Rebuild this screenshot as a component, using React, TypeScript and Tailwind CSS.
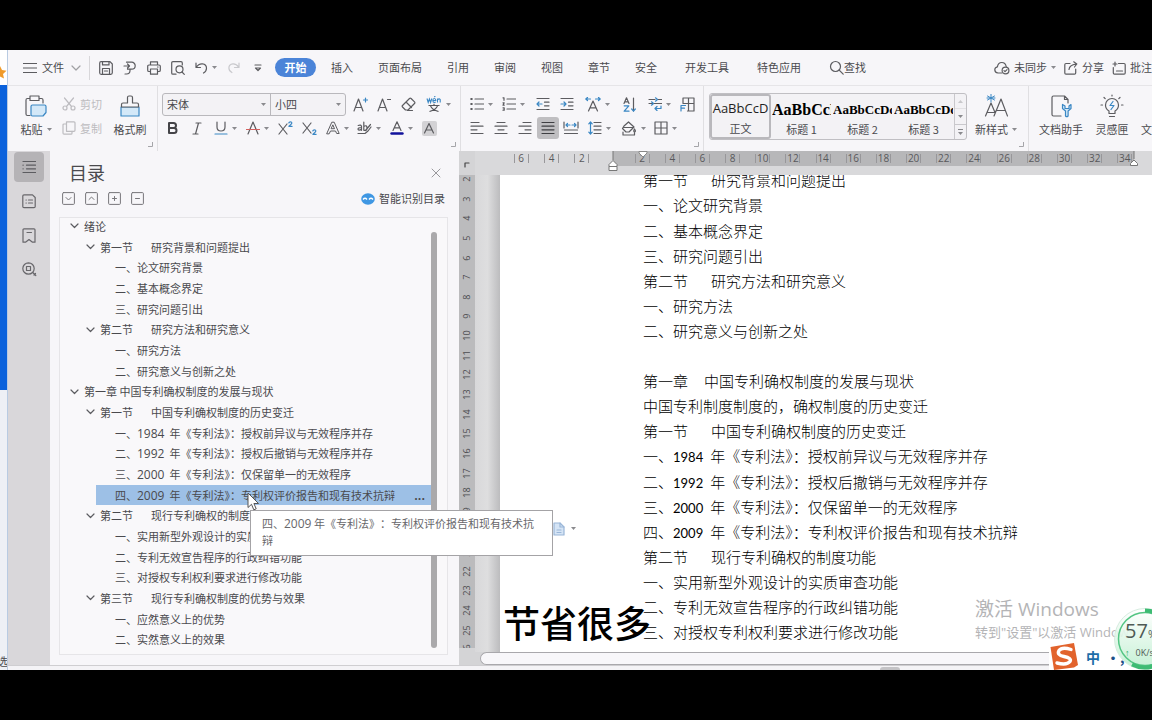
import type { ReactNode } from 'react';

type IconProps = { children: ReactNode; w?: number; h?: number; className?: string };

function Icon({ children, w = 14, h = 14, className = 'text-[#5c5c60]' }: IconProps) {
  return (
    <svg
      width={w}
      height={h}
      viewBox={`0 0 ${w} ${h}`}
      fill="none"
      stroke="currentColor"
      strokeWidth="1.2"
      strokeLinecap="round"
      strokeLinejoin="round"
      className={`shrink-0 ${className}`}
      aria-hidden="true"
    >
      {children}
    </svg>
  );
}

const BLUE = '#3a87c4';

function Caret() {
  return (
    <svg width="5" height="3" viewBox="0 0 5 3" className="shrink-0 fill-[#8a8a8e]" aria-hidden="true">
      <path d="M0 0h5L2.5 3z" />
    </svg>
  );
}

type ToolProps = { label: string; children: ReactNode; width?: string; caret?: boolean };

function Tool({ label, children, width = 'w-6', caret = false }: ToolProps) {
  return (
    <button type="button" aria-label={label} className={`flex h-6 shrink-0 items-center justify-center gap-1 ${width}`}>
      {children}
      {caret && <Caret />}
    </button>
  );
}

function Corner() {
  return (
    <svg width="5" height="5" viewBox="0 0 5 5" className="absolute right-1 bottom-1 fill-none stroke-[#a5a5a9]" aria-hidden="true">
      <path d="M4.5 0v4.5H0" />
    </svg>
  );
}

type BigProps = { label: string; children: ReactNode; width: string; caret?: boolean };

function BigTool({ label, children, width, caret = false }: BigProps) {
  return (
    <button type="button" className={`flex shrink-0 flex-col items-center ${width}`}>
      <span className="flex h-7 items-center justify-center">{children}</span>
      <span className="flex items-center gap-1 text-[11px] leading-[18px] whitespace-nowrap">
        {label}
        {caret && <Caret />}
      </span>
    </button>
  );
}

function MenuBar() {
  return (
    <nav className="flex h-9 shrink-0 items-center border-b border-[#e6e5e8] pl-[15px] text-[11px]">
      <button type="button" className="flex items-center gap-[5px]">
        <Icon>
          <path d="M.5 2.5h13M.5 7h13M.5 11.5h13" />
        </Icon>
        文件
        <Icon w={10} h={6} className="ml-0.5 text-[#a0a0a4]">
          <path d="M1 1l4 4 4-4" />
        </Icon>
      </button>
      <span className="mr-1 ml-2 h-6 w-px shrink-0 bg-[#d8d7da]" />
      <Tool label="保存">
        <Icon>
          <path d="M2 .7h9l2.3 2.3v8.800q0 1.500-1.500 1.500H2.200q-1.500 0-1.500-1.500V2.200Q.7.7 2 .7zM3.500.9v3h6.500v-3M3.500 13V7.500h7V13M5.500 10h3" />
        </Icon>
      </Tool>
      <Tool label="输出为PDF">
        <Icon>
          <path d="M3.500 1.200h5.200a3.500 3.500 0 010 7H7M1 5h5.500M4.500 3l2 2-2 2M4.500 8.200h2.500v1.300q0 3.500-3.500 3.500H2" />
        </Icon>
      </Tool>
      <Tool label="打印">
        <Icon>
          <path d="M3.500 4V.8h7V4M3.500 10.500H2q-1.300 0-1.300-1.300V5.300Q.7 4 2 4h10q1.300 0 1.300 1.300v3.900q0 1.300-1.300 1.300h-1.500M3.500 8h7v5.200h-7zM10.500 6h.6" />
        </Icon>
      </Tool>
      <Tool label="打印预览">
        <Icon>
          <path d="M5 13.200H2q-1.300 0-1.300-1.300V2Q.7.700 2 .7h8q1.300 0 1.300 1.300v2M11 11l2.300 2.300" />
          <circle cx="8.500" cy="8.300" r="3.500" />
        </Icon>
      </Tool>
      <Tool label="撤销" width="w-8" caret>
        <Icon w={13}>
          <path d="M1 2v4.500h4.500M1.300 6.300Q3.500 2.500 7.500 2.800q4 .4 4 4.400 0 3-3 4.800" />
        </Icon>
      </Tool>
      <Tool label="恢复">
        <Icon w={12} className="text-[#c9c9cd]">
          <path d="M11 2v4.500H6.500M10.700 6.300Q8.500 2.800 5 2.900.900 3.300.9 7q0 3 3 4.500" />
        </Icon>
      </Tool>
      <Tool label="自定义快速访问工具栏">
        <Icon w={8} h={8}>
          <path d="M1 1h6M1.500 4h5L4 6.500z" />
        </Icon>
      </Tool>
      <button type="button" className="ml-[5px] h-[19px] w-[41px] shrink-0 rounded-full bg-[#4b84d8] font-bold text-white">
        开始
      </button>
      <div className="ml-[15px] flex shrink-0 gap-[25px] whitespace-nowrap">
        {['插入', '页面布局', '引用', '审阅', '视图', '章节', '安全'].map((t) => (
          <button type="button" key={t}>
            {t}
          </button>
        ))}
      </div>
      <div className="ml-7 flex shrink-0 gap-7 whitespace-nowrap">
        <button type="button">开发工具</button>
        <button type="button">特色应用</button>
        <button type="button" className="flex items-center">
          <Icon w={15} h={15}>
            <circle cx="6.500" cy="6.500" r="5" />
            <path d="M10.200 10.200l4 4" />
          </Icon>
          查找
        </button>
      </div>
      <div className="ml-auto flex shrink-0 items-center gap-2 whitespace-nowrap">
        <button type="button" className="flex items-center gap-1">
          <Icon w={16}>
            <path d="M8 12H4Q.8 11.700.8 8.800q0-2.500 2.600-3Q4 1.500 7.800 1.500q3.600 0 4.400 4" />
            <circle cx="11.500" cy="9.500" r="3.400" />
            <path d="M10 9.600l1 1 2-2" />
          </Icon>
          未同步
          <Caret />
        </button>
        <button type="button" className="flex items-center gap-1">
          <Icon>
            <path d="M6 2.500H2Q.8 2.500.8 3.700V12q0 1.200 1.200 1.200h8.500q1.200 0 1.200-1.200V8M5 8.500Q5.500 4 12 3.200M9.700.8L12.800 3l-2.300 3" />
          </Icon>
          分享
        </button>
        <button type="button" className="flex items-center gap-1">
          <Icon>
            <path d="M6.500 2.500h5.500q1.200 0 1.200 1.200v8.300q0 1.200-1.200 1.200H2.500q-1.200 0-1.200-1.200V6.500M4.500 10h6M1 3h4M3 1v4" />
          </Icon>
          批注
        </button>
      </div>
    </nav>
  );
}

function ClipboardGroup() {
  return (
    <section className="relative flex w-[149px] shrink-0 pt-1.5 pl-3">
      <BigTool label="粘贴" width="w-8" caret>
        <Icon w={22} h={22}>
          <path d="M5 3.500H2.500q-1.500 0-1.500 1.500v14q0 1.500 1.500 1.500H5M14 3.500h2.500Q18 3.500 18 5v3M5 1h9v4.500H5z" />
          <path d="M7.500 10h12q1.500 0 1.500 1.500v6L18 21H7.500Q6 21 6 19.500v-8Q6 10 7.500 10z" fill="#d3e8f8" stroke={BLUE} />
        </Icon>
      </BigTool>
      <div className="ml-2.5 flex flex-col text-[11px] text-[#bdbcc0]">
        <button type="button" className="flex h-6 items-center gap-1 whitespace-nowrap">
          <Icon className="text-[#bdbcc0]">
            <circle cx="3" cy="11" r="2" />
            <circle cx="11" cy="11" r="2" />
            <path d="M4.500 9.500L11.500 1M9.500 9.500L2.500 1" />
          </Icon>
          剪切
        </button>
        <button type="button" className="flex h-6 items-center gap-1 whitespace-nowrap">
          <Icon className="text-[#bdbcc0]">
            <path d="M4.500.800h7.500q1 0 1 1v7.500q0 1-1 1H4.500zM4.500 3H2Q1 3 1 4v8q0 1.200 1 1.200h7q1 0 1-1v-2" />
          </Icon>
          复制
        </button>
      </div>
      <BigTool label="格式刷" width="w-14">
        <Icon w={20} h={22}>
          <path d="M1 12h18v9H1z" fill="#d3e8f8" stroke={BLUE} />
          <path d="M1.500 12V9.500Q1.500 8 3 8h4.500V2.500Q7.500 1 9 1h2q1.500 0 1.500 1.500V8H17q1.500 0 1.500 1.500V12z" fill="#f7f6f9" />
        </Icon>
      </BigTool>
      <Corner />
    </section>
  );
}

function FontGroup() {
  return (
    <section className="relative w-[303px] shrink-0 border-l border-[#e0dfe2] pt-1.5">
      <div className="flex h-6 items-center pl-1">
        <div className="flex h-[23px] w-[184px] rounded-[3px] border border-[#b9b8bc] bg-[#f3f2f5] text-[11px]">
          <label className="flex w-[108px] items-center border-r border-[#b9b8bc] pr-1">
            <select aria-label="字体" className="w-full appearance-none bg-transparent pl-1 outline-none">
              <option>宋体</option>
            </select>
            <Caret />
          </label>
          <label className="flex flex-1 items-center pr-1">
            <select aria-label="字号" className="w-full appearance-none bg-transparent pl-1 outline-none">
              <option>小四</option>
            </select>
            <Caret />
          </label>
        </div>
        <span className="w-0.5" />
        <Tool label="增大字号">
          <Icon w={15} h={15}>
            <path d="M1 14L5.500 2 10 14M2.500 10.500h6" />
            <path d="M10.500 3h4M12.500 1v4" stroke={BLUE} />
          </Icon>
        </Tool>
        <Tool label="减小字号">
          <Icon w={14} h={15}>
            <path d="M1 14L5.500 2 10 14M2.500 10.500h6M10.500 2.500h3" />
          </Icon>
        </Tool>
        <Tool label="清除格式">
          <Icon w={15} h={15}>
            <path d="M1.500 8.500L8.500 1.500q.8-.7 1.600 0l3.400 3.400q.8.800 0 1.600L7 13H4.500l-3-3q-.7-.7 0-1.500zM5 5l5.500 5.500M6.500 13.500h5" />
          </Icon>
        </Tool>
        <Tool label="拼音指南" width="w-9" caret>
          <svg width="16" height="16" viewBox="0 0 16 16" fill="none" strokeWidth="1.100" aria-hidden="true">
            <path d="M1 2.500l1.200 4 1.200-3.500 1.200 3.500 1.200-4M6.800 4.500h3q-.1-2-1.500-2t-1.500 2q0 2 1.700 2l1.200-.5M8.300 1l1-.9M11.500 6.500v-4M11.500 4q1.500-2 2.700-.5v3" stroke={BLUE} />
            <path d="M2.500 9.500h11M8 7.800v1.700M4.500 10q2 4 8 5.500M11.500 10q-2 4-8 5.500" stroke="#55555a" />
          </svg>
        </Tool>
      </div>
      <div className="flex h-6 items-center pl-[3px]">
        <Tool label="加粗">
          <Icon w={12} h={12} className="text-[#444448]">
            <path d="M2 1h4.500a2.400 2.400 0 010 5H2zM2 6h5a2.500 2.500 0 010 5H2z" strokeWidth="2" />
          </Icon>
        </Tool>
        <Tool label="倾斜">
          <Icon w={10} h={13}>
            <path d="M4 1h5M1 12h5M6.500 1l-3 11" />
          </Icon>
        </Tool>
        <Tool label="下划线" width="w-8" caret>
          <Icon>
            <path d="M3 1v5q0 4 4 4t4-4V1" />
            <path d="M1 13h12" stroke={BLUE} />
          </Icon>
        </Tool>
        <Tool label="删除线" width="w-8" caret>
          <Icon>
            <path d="M2 13L7 1l5 12" />
            <path d="M0 8.500h14" stroke="#d2605e" />
          </Icon>
        </Tool>
        <Tool label="上标">
          <Icon w={15}>
            <path d="M1 3l8 10M9 3L1 13" />
            <path d="M10.800 2q.3-1.200 1.600-1.200 1.500 0 1.400 1.300 0 .8-2.900 3.200h3.200" stroke={BLUE} />
          </Icon>
        </Tool>
        <Tool label="下标">
          <Icon w={15}>
            <path d="M1 2l8 10M9 2L1 12" />
            <path d="M10.800 10q.3-1.200 1.600-1.200 1.500 0 1.400 1.300 0 .8-2.900 3.200h3.200" stroke={BLUE} />
          </Icon>
        </Tool>
        <Tool label="文字效果" width="w-8" caret>
          <Icon>
            <path d="M.8 12.500L5.800 1.200h2.400l5 11.300h-2.500L9.500 10h-5l-1.200 2.500zM5.500 7.700h3L7 4.200z" strokeWidth="1" />
          </Icon>
        </Tool>
        <Tool label="突出显示" width="w-8" caret>
          <Icon w={15}>
            <path d="M1.200 4.500q2.800-1 3.300.8v4M4.500 6.500Q1 6.500 1 8.200q.3 1.800 3.500.2M6.800 1v8.300M6.800 5.500Q10 3.500 10 7t-3.200 2M8.500 9.500L13.500 3.500M1 12.500h7l3-2.500 3-4" />
          </Icon>
        </Tool>
        <Tool label="字体颜色" width="w-8" caret>
          <Icon>
            <path d="M3 9.500L7 .8l4 8.700M4.200 6.800h5.600" />
            <path d="M1.500 12.500h11" stroke="#12129c" strokeWidth="2.400" />
          </Icon>
        </Tool>
        <Tool label="字符底纹">
          <span className="flex size-[15px] items-center justify-center rounded-[2px] bg-[#d3d2d5]">
            <Icon w={12} h={12}>
              <path d="M1.500 11L6 1.500 10.500 11M3 8h6" />
            </Icon>
          </span>
        </Tool>
      </div>
      <Corner />
    </section>
  );
}

function ParagraphGroup() {
  return (
    <section className="relative w-[243px] shrink-0 border-l border-[#e0dfe2] pt-1.5 pl-1">
      <div className="flex h-6 items-center">
        <Tool label="项目符号" width="w-8" caret>
          <Icon>
            <path d="M5 2h9M5 7h9M5 12h9" />
            <path d="M1.200 2h.6M1.200 7h.6M1.200 12h.6" strokeWidth="2" />
          </Icon>
        </Tool>
        <Tool label="编号" width="w-8" caret>
          <Icon>
            <path d="M5 2h9M5 7h9M5 12h9M1 .8h1v2.500M1 5.800h1.200L1 8.200h1.200M1 10.800h1.200v2.400H1" />
          </Icon>
        </Tool>
        <Tool label="减少缩进" width="w-7">
          <Icon>
            <path d="M1 1.500h12M8.500 5.200H13M8.500 8.800H13M1 12.500h12" />
            <path d="M6 7H1M3 5L1 7l2 2" stroke={BLUE} />
          </Icon>
        </Tool>
        <Tool label="增加缩进" width="w-5">
          <Icon>
            <path d="M1 1.500h12M8.500 5.200H13M8.500 8.800H13M1 12.500h12" />
            <path d="M1 7h5M4 5l2 2-2 2" stroke={BLUE} />
          </Icon>
        </Tool>
        <Tool label="中文版式" width="w-10" caret>
          <Icon w={16} h={15}>
            <path d="M3.500 14L8 4l4.500 10M5.200 10.800h5.600" />
            <path d="M5.500 2H.8M2.500.500L.8 2l1.700 1.500M10.500 2h4.700M13.500.500L15.200 2l-1.700 1.500" stroke={BLUE} />
          </Icon>
        </Tool>
        <Tool label="排序">
          <Icon w={13} h={15}>
            <path d="M1 6.500L3.500.800 6 6.500M1.800 4.800h3.400M10.500 1v13" />
            <path d="M1.200 8.800h4.600L1.200 14.200h4.800M8.700 12l1.800 2.200 1.800-2.200" stroke={BLUE} />
          </Icon>
        </Tool>
        <Tool label="显示编辑标记" width="w-9" caret>
          <Icon>
            <path d="M1 2.500h6M10 2.500h3.500M1 6.500h12.500" />
            <path d="M7.500.8l2 1.700-2 1.700M13 9v2.500H7M9 9.500l-2 2 2 2M3.500 4.800l2 1.700-2 1.700" stroke={BLUE} />
          </Icon>
        </Tool>
        <Tool label="制表位" width="w-5">
          <Icon w={15} h={15}>
            <path d="M3 6V1h11v13H7.500M3 6.500h11M8.500 1v13" />
            <path d="M1 14V8.500h4.500M1 11.200h3.500" stroke={BLUE} />
          </Icon>
        </Tool>
      </div>
      <div className="flex h-6 items-center">
        <Tool label="左对齐">
          <Icon>
            <path d="M1 1.500h8M1 5.200h12M1 8.800h6M1 12.500h12" />
          </Icon>
        </Tool>
        <Tool label="居中对齐">
          <Icon>
            <path d="M3 1.500h8M1 5.200h12M4 8.800h6M1 12.500h12" />
          </Icon>
        </Tool>
        <Tool label="右对齐">
          <Icon>
            <path d="M5 1.500h8M1 5.200h12M7 8.800h6M1 12.500h12" />
          </Icon>
        </Tool>
        <Tool label="两端对齐" width="w-[22px]">
          <span className="flex size-[22px] items-center justify-center rounded-[3px] bg-[#bfbec1]">
            <Icon className="text-[#3f3f43]">
              <path d="M1 1.500h12M1 5.200h12M1 8.800h12M1 12.500h12" />
            </Icon>
          </span>
        </Tool>
        <Tool label="分散对齐">
          <Icon w={16}>
            <path d="M1 1v6M15 1v6M1.500 9h13M1.500 12.500h13" />
            <path d="M3 4h4M4.500 2.500L3 4l1.500 1.500M13 4H9M11.500 2.500L13 4l-1.500 1.500" stroke={BLUE} />
          </Icon>
        </Tool>
        <Tool label="行距" width="w-8" caret>
          <Icon>
            <path d="M6 1.500h7M6 5.200h7M6 8.800h7M6 12.500h7" />
            <path d="M2.500 1v12M.8 2.800L2.500 1l1.700 1.800M.8 11.200L2.500 13l1.700-1.800" stroke={BLUE} />
          </Icon>
        </Tool>
        <Tool label="底纹颜色" width="w-9" caret>
          <Icon w={16} h={15}>
            <path d="M3 5L7.500 1l5.500 5-5 5H5L1.500 7.500zM3 6.500h9M2 11v3h11.500v-2M13.500 8q1.800 2.500 0 3.200-1.500-.6 0-3.200z" />
          </Icon>
        </Tool>
        <Tool label="边框" width="w-7" caret>
          <Icon>
            <path d="M1 1h12v12H1zM7 1v12M1 7h12" />
          </Icon>
        </Tool>
      </div>
      <Corner />
    </section>
  );
}

const STYLES = [
  { name: '标题 1', sample: 'text-[16px]' },
  { name: '标题 2', sample: 'text-[13px]' },
  { name: '标题 3', sample: 'text-[13px]' },
];

function StylesGroup() {
  return (
    <section className="relative flex w-[325px] shrink-0 items-start border-l border-[#e0dfe2] pt-[7px] pl-[5px]">
      <div className="flex h-[47px] w-[258px] shrink-0 overflow-hidden rounded-[3px] border border-[#c0bfc3] bg-[#f3f2f5]">
        <button type="button" className="w-[61px] shrink-0 overflow-hidden rounded-[3px] border-2 border-[#b9b8bc] text-[11px]">
          <span className="block h-[23px] font-['Open_Sans',sans-serif] text-[13px] leading-[24px] whitespace-nowrap text-[#1f1f22]">AaBbCcD</span>
          <span className="block leading-[18px]">正文</span>
        </button>
        {STYLES.map((s) => (
          <button type="button" key={s.name} className="w-[61px] shrink-0 overflow-hidden px-px pt-0.5 text-[11px]">
            <span className={`block h-[23px] overflow-hidden text-left font-['Liberation_Serif',serif] leading-[26px] font-bold whitespace-nowrap text-black ${s.sample}`}>
              AaBbCcDd
            </span>
            <span className="block leading-[18px]">{s.name}</span>
          </button>
        ))}
        <div className="flex flex-1 flex-col divide-y divide-[#c9c8cc] border-l border-[#c9c8cc]">
          <button type="button" aria-label="上一行" className="flex flex-1 items-center justify-center opacity-40">
            <span className="rotate-180">
              <Caret />
            </span>
          </button>
          <button type="button" aria-label="下一行" className="flex flex-1 items-center justify-center">
            <Caret />
          </button>
          <button type="button" aria-label="更多样式" className="flex flex-1 flex-col items-center justify-center gap-0.5">
            <span className="h-px w-[5px] bg-[#8a8a8e]" />
            <Caret />
          </button>
        </div>
      </div>
      <div className="-mt-px ml-1">
        <BigTool label="新样式" width="w-[50px]" caret>
          <Icon w={24} h={24}>
            <path d="M1.500 22L7 9l4 9.500M3 18.500h8M10 22l7-17 6.500 17M12 16.500h9" />
            <path d="M7 0v8M3.500 2l7 4M10.500 2l-7 4M3 4h8" stroke={BLUE} strokeWidth="1" />
          </Icon>
        </BigTool>
      </div>
      <Corner />
    </section>
  );
}

function AssistGroup() {
  return (
    <section className="flex shrink-0 gap-[3px] border-l border-[#e0dfe2] pt-1.5 pl-1.5">
      <BigTool label="文档助手" width="w-[52px]">
        <Icon w={22} h={24}>
          <path d="M11 22H3.500Q2 22 2 20.500v-17Q2 2 3.500 2h11L18 5.500V9M14.500 2v3.500H18" />
          <path d="M12.500 10.500v4l3 2.500v5q1.300 1.300 2.600 0v-5l2.900-2.500v-4l-2 1.500v2.500h-4V12z" fill="#d3e8f8" stroke={BLUE} />
        </Icon>
      </BigTool>
      <BigTool label="灵感匣" width="w-11">
        <Icon w={24} h={24}>
          <path d="M9 19.500v-2.500Q5.500 15 5.500 11a6.500 6.500 0 0113 0q0 4-3.500 6v2.500zM9.500 22.500h5M12 1v1M4 3.500l1.200 1.200M20 3.500l-1.200 1.200M1 11h1.500M21.500 11H23" />
          <path d="M13 7.500l-3 4h4l-3 4" stroke={BLUE} />
        </Icon>
      </BigTool>
      <BigTool label="文字工具" width="w-[52px]">
        <span />
      </BigTool>
    </section>
  );
}

function Rail() {
  return (
    <aside className="flex w-[42px] shrink-0 flex-col items-center gap-1 bg-[#d9d7da] pt-px">
      <button type="button" aria-label="目录" className="flex size-[30px] items-center justify-center rounded-[4px] bg-[#b5b3b6]">
        <Icon>
          <path d="M1 1.500h12.500M4.500 5.200h9M4.500 8.800h9M1 12.500h12.500M1 5.200h.2M1 8.800h.2" />
        </Icon>
      </button>
      {[
        { label: '章节导航', d: 'M2.500.800h8L13.200 3.500v9q0 1.200-1.200 1.200H2q-1.200 0-1.200-1.200V2Q.8.800 2 .8M4 6h.3M4 9h.3M6.500 6h4M6.500 9h4' },
        { label: '书签', d: 'M2 .8h10q1 0 1 1v12.400h-2.500L7 11.500l-3.500 2.700H1V1.800q0-1 1-1zM5 4.500h4.500' },
        { label: '查找和替换', d: 'M6.500.8a5.700 5.700 0 100 11.400 5.700 5.700 0 000-11.400zM4.500 4.500h4v4h-4zM10.800 10.500l3 3M12 13l1.500-1.500' },
      ].map((b) => (
        <button type="button" key={b.label} aria-label={b.label} className="flex size-[30px] items-center justify-center">
          <Icon w={15} h={15} className="text-[#68676b]">
            <path d={b.d} />
          </Icon>
        </button>
      ))}
    </aside>
  );
}

type TocItem = { level: 0 | 1 | 2; head?: string; text: string; year?: string; active?: boolean };

const TOC: TocItem[] = [
  { level: 0, text: '绪论' },
  { level: 1, head: '第一节', text: '研究背景和问题提出' },
  { level: 2, text: '一、论文研究背景' },
  { level: 2, text: '二、基本概念界定' },
  { level: 2, text: '三、研究问题引出' },
  { level: 1, head: '第二节', text: '研究方法和研究意义' },
  { level: 2, text: '一、研究方法' },
  { level: 2, text: '二、研究意义与创新之处' },
  { level: 0, text: '第一章 中国专利确权制度的发展与现状' },
  { level: 1, head: '第一节', text: '中国专利确权制度的历史变迁' },
  { level: 2, head: '一、', year: '1984', text: '年《专利法》：授权前异议与无效程序并存' },
  { level: 2, head: '二、', year: '1992', text: '年《专利法》：授权后撤销与无效程序并存' },
  { level: 2, head: '三、', year: '2000', text: '年《专利法》：仅保留单一的无效程序' },
  { level: 2, head: '四、', year: '2009', text: '年《专利法》：专利权评价报告和现有技术抗辩', active: true },
  { level: 1, head: '第二节', text: '现行专利确权的制度功能' },
  { level: 2, text: '一、实用新型外观设计的实质审查功能' },
  { level: 2, text: '二、专利无效宣告程序的行政纠错功能' },
  { level: 2, text: '三、对授权专利权利要求进行修改功能' },
  { level: 1, head: '第三节', text: '现行专利确权制度的优势与效果' },
  { level: 2, text: '一、应然意义上的优势' },
  { level: 2, text: '二、实然意义上的效果' },
];

const TOC_INDENT = ['ml-2.5', 'ml-[26px]', 'ml-9 pl-[19px]'];

function TocRow({ item }: { item: TocItem }) {
  return (
    <li className={`flex items-center whitespace-nowrap ${TOC_INDENT[item.level]} ${item.active ? 'bg-[#9dc0e6]' : ''}`}>
      {item.level < 2 && (
        <Icon w={9} h={6} className="mr-[5px] text-[#5c5c60]">
          <path d="M1 1l3.500 3.500L8 1" />
        </Icon>
      )}
      <span className="flex items-baseline">
        {item.head && <span className={item.year ? '' : 'mr-[18px]'}>{item.head}</span>}
        {item.year && <span className="mr-[5px] font-['Open_Sans',sans-serif] text-[12px] leading-none">{item.year}</span>}
        <span>{item.text}</span>
      </span>
      {item.active && <span className="ml-auto pr-1.5 font-bold">...</span>}
    </li>
  );
}

function TocPanel() {
  return (
    <section className="flex w-[409px] shrink-0 flex-col bg-[#f7f6f9] pr-[11px] pl-[9px]">
      <header className="flex h-[37px] shrink-0 items-end justify-between pr-[7px] pl-2.5">
        <h2 className="text-[18px] leading-[32px]">目录</h2>
        <button type="button" aria-label="关闭" className="pb-2.5">
          <Icon w={10} h={10} className="text-[#99989c]">
            <path d="M1 1l8 8M9 1L1 9" strokeWidth="1" />
          </Icon>
        </button>
      </header>
      <div className="flex h-[29px] shrink-0 items-center gap-2.5 pb-2 pl-[3px] text-[11px]">
        {[
          { label: '展开', d: 'M4 5.500l2.500 2.500L9 5.500' },
          { label: '收起', d: 'M4 7.500L6.500 5 9 7.500' },
          { label: '添加', d: 'M4.500 6.500h4M6.500 4.500v4' },
          { label: '删除', d: 'M4.500 6.500h4' },
        ].map((b) => (
          <button type="button" key={b.label} aria-label={b.label}>
            <Icon w={13} h={13} className="text-[#77767a]">
              <rect x=".6" y=".6" width="11.800" height="11.800" rx="1" strokeWidth="1" />
              <path d={b.d} strokeWidth="1" />
            </Icon>
          </button>
        ))}
        <button type="button" className="mr-[3px] ml-auto flex items-center gap-1">
          <svg width="14" height="12" viewBox="0 0 14 12" aria-hidden="true">
            <ellipse cx="7" cy="6" rx="6.800" ry="5.800" fill="#3f97e3" />
            <path d="M2 6.500Q4 4 6 6.500M8 6.500q2-2.500 4 0" stroke="#fff" strokeWidth="1.300" fill="none" />
          </svg>
          智能识别目录
        </button>
      </div>
      <div className="mb-2.5 flex min-h-0 flex-1 border border-[#e6e5e8] bg-[#f9f8fa] pr-2.5 pb-1 text-[11px]">
        <ul className="-mt-0.5 grid min-w-0 flex-1 auto-rows-fr">
          {TOC.map((item) => (
            <TocRow key={(item.head ?? '') + item.text} item={item} />
          ))}
        </ul>
        <div className="mt-3.5 mb-0.5 w-1.5 shrink-0 rounded-full bg-[#aaa9ab]" />
      </div>
    </section>
  );
}

function RulerCell({ value }: { value: number }) {
  return (
    <span className="flex min-w-0 flex-1 items-center justify-center">
      <span className="flex w-[15px] items-center justify-center border-x border-[#98979a] leading-[9px]">{value}</span>
    </span>
  );
}

const SCALE = Array.from({ length: 17 }, (_, i) => (i + 1) * 2);

function HorizontalRuler() {
  return (
    <div className="relative h-6 shrink-0 overflow-hidden bg-[#d9d9db] font-['Open_Sans',sans-serif] text-[10px] text-[#59595c]">
      <div className="flex h-[15px] pl-[31px]">
        <div className="flex w-[91px] shrink-0">
          {[6, 4, 2].map((n) => (
            <RulerCell key={n} value={n} />
          ))}
        </div>
        <span className="w-4 shrink-0" />
        <div className="flex w-[521px] shrink-0 bg-[#b7b7b9] pl-3.5">
          <div className="flex w-[513px] shrink-0">
            {SCALE.map((n) => (
              <RulerCell key={n} value={n} />
            ))}
          </div>
        </div>
      </div>
      <svg width="12" height="24" viewBox="0 0 12 24" className="absolute top-0 left-[132px] fill-white stroke-[#777]" aria-hidden="true">
        <path d="M6 0v9" />
        <path d="M2 13.500L6 9.500l4 4v2H2zM2 15.500h8v4H2z" />
      </svg>
      <svg width="10" height="8" viewBox="0 0 10 8" className="absolute top-0 left-[163px] fill-white stroke-[#888]" aria-hidden="true">
        <path d="M1 .5h8v1.500L5 6 1 2z" />
      </svg>
      <svg width="10" height="16" viewBox="0 0 10 16" className="absolute top-0 left-[654px] fill-white stroke-[#777]" aria-hidden="true">
        <path d="M5 0v8" />
        <path d="M1.500 14.500v-2L5 9l3.500 3.500v2z" />
      </svg>
    </div>
  );
}

function VerticalRuler() {
  return (
    <div className="flex w-4 shrink-0 flex-col bg-[#d4d4d6]">
      <span className="flex h-6 shrink-0 items-center justify-center pt-1">
        <Icon w={6} h={6} className="text-[#444]">
          <path d="M1 5V1h4" />
        </Icon>
      </span>
      <div className="h-[473px] overflow-hidden bg-[#bbbbbd]">
        <div className="-mt-1.5 grid h-[491px] auto-rows-fr font-['Open_Sans',sans-serif] text-[9px] text-[#4c4c50]">
          {Array.from({ length: 25 }, (_, i) => i + 2).map((n) => (
            <span key={n} className="flex rotate-180 items-center justify-center [writing-mode:vertical-rl]">
              {n}
            </span>
          ))}
        </div>
      </div>
    </div>
  );
}

type Line = { head?: string; gap?: string; year?: string; text: string };

const LINES: Line[] = [
  { head: '第一节', gap: 'mr-[23px]', text: '研究背景和问题提出' },
  { text: '一、论文研究背景' },
  { text: '二、基本概念界定' },
  { text: '三、研究问题引出' },
  { head: '第二节', gap: 'mr-[23px]', text: '研究方法和研究意义' },
  { text: '一、研究方法' },
  { text: '二、研究意义与创新之处' },
  { text: '' },
  { head: '第一章', gap: 'mr-4', text: '中国专利确权制度的发展与现状' },
  { text: '中国专利制度制度的，确权制度的历史变迁' },
  { head: '第一节', gap: 'mr-[23px]', text: '中国专利确权制度的历史变迁' },
  { head: '一、', year: '1984', text: '年《专利法》：授权前异议与无效程序并存' },
  { head: '二、', year: '1992', text: '年《专利法》：授权后撤销与无效程序并存' },
  { head: '三、', year: '2000', text: '年《专利法》：仅保留单一的无效程序' },
  { head: '四、', year: '2009', text: '年《专利法》：专利权评价报告和现有技术抗辩' },
  { head: '第二节', gap: 'mr-[23px]', text: '现行专利确权的制度功能' },
  { text: '一、实用新型外观设计的实质审查功能' },
  { text: '二、专利无效宣告程序的行政纠错功能' },
  { text: '三、对授权专利权利要求进行修改功能' },
];

function Document() {
  return (
    <div className="flex min-w-0 flex-1 flex-col bg-[#d4d4d6]">
      <HorizontalRuler />
      <div className="flex min-h-0 flex-1">
        <div className="w-[25px] shrink-0 bg-linear-to-r from-[#d8d8da] via-[#dededf] to-[#bcbcbe]" />
        <article className="min-w-0 flex-1 overflow-hidden bg-white pl-[143px] text-[15px] font-light text-black">
          <div className="-mt-[7px] grid h-[477px] auto-rows-fr">
            {LINES.map((l, i) => (
              <p key={i} className="flex items-center whitespace-nowrap">
                <span className="flex items-baseline">
                  {l.head && <span className={l.gap}>{l.head}</span>}
                  {l.year && <span className="mr-[7px] font-['Lato',sans-serif] text-[13px] leading-none font-normal">{l.year}</span>}
                  <span>{l.text}</span>
                </span>
              </p>
            ))}
          </div>
        </article>
      </div>
      <div className="ml-[5px] h-[13px] shrink-0 rounded-l-full border border-r-0 border-[#a9a8ac] bg-[#f8f7fa]" />
    </div>
  );
}

function Overlays() {
  return (
    <>
      <div role="tooltip" className="absolute top-[460px] left-[250px] w-[303px] border border-[#a4a3a6] bg-white pt-1 pr-2 pb-1.5 pl-[11px] text-[11px] leading-[17px] whitespace-nowrap text-[#68676b] [text-spacing-trim:space-all]">
        四、<span className="font-['Open_Sans',sans-serif] text-[12px]">2009</span> 年《专利法》：专利权评价报告和现有技术抗
        <br />辩
      </div>
      <svg width="12" height="20" viewBox="0 0 12 20" className="absolute top-[442px] left-[247px]" aria-hidden="true">
        <path d="M1 1v14.500l3.500-3.200 2.300 5.500 2.400-1-2.300-5.300h4.600z" fill="#fff" stroke="#555" />
      </svg>
      <button type="button" aria-label="粘贴选项" className="absolute top-[471px] left-[553px] flex items-center gap-1.5">
        <Icon w={12} h={15} className="text-[#9ab6d8]">
          <path d="M1 2h6l4 4v8H1z" fill="#d5e4f5" />
          <path d="M7 2v4h4M4 9h4M4 11.500h4" />
        </Icon>
        <Caret />
      </button>
      <p className="absolute top-[547px] left-[503px] text-[37px] leading-[50px] font-medium text-black">节省很多</p>
      <div className="absolute top-[546px] left-[975px] whitespace-nowrap text-[#b4b4b6]">
        <p className="font-['Open_Sans','Noto_Sans_CJK_SC',sans-serif] text-[19px] leading-[26px]">激活 Windows</p>
        <p className="font-['Open_Sans','Noto_Sans_CJK_SC',sans-serif] text-[13px] leading-[20px]">转到"设置"以激活 Windows</p>
      </div>
      <div className="absolute right-0 bottom-0 flex h-[27px] w-[103px] items-center gap-1.5 overflow-hidden bg-white">
        <svg width="31" height="27" viewBox="0 0 31 27" aria-hidden="true">
          <path d="M1.500 4L25 0l4 22-4 2.500L5 27z" fill="#e2632c" />
          <path d="M22 6.500Q13 3.500 10 7.500q-2.500 4.500 5 6 8 1.500 6 5-3 4-13 1.500" fill="none" stroke="#fff" strokeWidth="3.400" strokeLinecap="round" />
        </svg>
        <span className="text-[14px] leading-5 font-bold text-[#1d6da8]">中</span>
        <span className="text-[14px] leading-5 font-bold text-[#1d4f88]">•,</span>
      </div>
      <div className="absolute -right-[24px] bottom-0 flex size-[62px] flex-col justify-center rounded-full border border-[#d6ecdf] bg-linear-to-b from-white/80 to-[#c5f0d5] pl-2.5 font-['Open_Sans',sans-serif] text-[#4f5a55]">
        <svg width="62" height="62" viewBox="0 0 62 62" className="absolute -top-px -left-px fill-none" aria-hidden="true">
          <circle cx="31" cy="31" r="26.500" stroke="#53c583" strokeWidth="1.500" />
          <path d="M31 2.500A28.500 28.500 0 0140 4M18 56.500A28.500 28.500 0 0040 58" stroke="#3dbb73" strokeWidth="4" />
        </svg>
        <span className="text-[20px] leading-[24px]">57<span className="text-[11px]">%</span></span>
        <span className="flex gap-1.5 text-[9px] leading-[14px] whitespace-nowrap">
          <span className="font-bold text-[#2ba866]">↑</span>0K/s
        </span>
      </div>
    </>
  );
}

export default function App() {
  return (
    <div className="flex h-screen min-h-[720px] flex-col bg-black py-[50px] font-['Noto_Sans_CJK_SC',sans-serif] text-[#4a4a4e]">
      <main className="relative flex min-h-0 flex-1 overflow-hidden">
        <div className="flex w-2 shrink-0 flex-col overflow-hidden border-r border-[#b9cbe2] bg-[#eef0f5]">
          <div className="flex h-[35px] shrink-0 items-center bg-white pt-2">
            <svg width="7" height="14" viewBox="0 0 7 14" aria-hidden="true">
              <path d="M0 1l2 4 4.500.7L3 9l1 4.500-4-2z" fill="#f09a2a" />
            </svg>
          </div>
          <div className="h-[305px] shrink-0 bg-[#0b62dc]" />
          <span className="mt-auto -ml-[3px] pb-0.5 text-[11px] leading-[14px]">选</span>
        </div>
        <div className="flex min-w-0 flex-1 flex-col bg-[#f7f6f9]">
          <MenuBar />
          <div className="flex h-[65px] shrink-0 overflow-hidden">
            <ClipboardGroup />
            <FontGroup />
            <ParagraphGroup />
            <StylesGroup />
            <AssistGroup />
          </div>
          <div className="flex min-h-0 flex-1">
            <Rail />
            <TocPanel />
            <VerticalRuler />
            <Document />
          </div>
          <footer className="flex h-[5px] shrink-0 items-end border-t border-[#cfced1] bg-[#f4f3f6]">
            <span className="ml-[872px] h-[3px] w-5 rounded-t bg-[#c4c3c6]" />
          </footer>
        </div>
        <Overlays />
      </main>
    </div>
  );
}
